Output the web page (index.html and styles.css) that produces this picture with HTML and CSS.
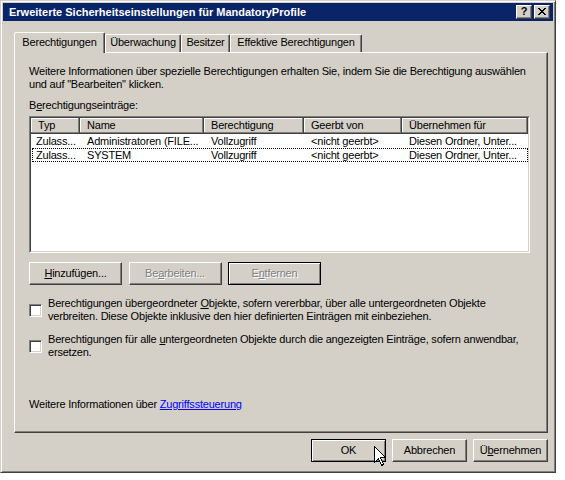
FILE: index.html
```html
<!DOCTYPE html>
<html>
<head>
<meta charset="utf-8">
<link rel="stylesheet" href="styles.css">
</head>
<body>
<div class="window">
  <div class="titlebar">
    <span class="title">Erweiterte Sicherheitseinstellungen für MandatoryProfile</span>
    <div class="capbtns">
      <span class="capbtn help">?</span>
      <span class="capbtn close"><svg width="8" height="7" viewBox="0 0 8 7" shape-rendering="crispEdges"><path d="M0 0h2v1h-2zM6 0h2v1h-2zM1 1h2v1h-2zM5 1h2v1h-2zM2 2h4v1h-4zM3 3h2v1h-2zM2 4h4v1h-4zM1 5h2v1h-2zM5 5h2v1h-2zM0 6h2v1h-2zM6 6h2v1h-2z" fill="#000"/></svg></span>
    </div>
  </div>
  <div class="content">
    <div class="tabs">
      <div class="tab active t1">Berechtigungen</div>
      <div class="tab t2">Überwachung</div>
      <div class="tab t3">Besitzer</div>
      <div class="tab t4">Effektive Berechtigungen</div>
    </div>
    <div class="panel">
      <p class="info">Weitere Informationen über spezielle Berechtigungen erhalten Sie, indem Sie die Berechtigung auswählen<br>und auf "Bearbeiten" klicken.</p>
      <div class="label">B<u>e</u>rechtigungseinträge:</div>
      <div class="list">
        <div class="list-in">
          <div class="lrow head">
            <div class="hcell c1">Typ</div>
            <div class="hcell c2">Name</div>
            <div class="hcell c3">Berechtigung</div>
            <div class="hcell c4">Geerbt von</div>
            <div class="hcell c5">Übernehmen für</div>
          </div>
          <div class="lrow item">
            <div class="cell c1">Zulass...</div>
            <div class="cell c2">Administratoren (FILE...</div>
            <div class="cell c3">Vollzugriff</div>
            <div class="cell c4">&lt;nicht geerbt&gt;</div>
            <div class="cell c5">Diesen Ordner, Unter...</div>
          </div>
          <div class="lrow item focused">
            <div class="cell c1">Zulass...</div>
            <div class="cell c2">SYSTEM</div>
            <div class="cell c3">Vollzugriff</div>
            <div class="cell c4">&lt;nicht geerbt&gt;</div>
            <div class="cell c5">Diesen Ordner, Unter...</div>
          </div>
        </div>
      </div>
      <div class="btnrow">
        <div class="btn"><u>H</u>inzufügen...</div>
        <div class="btn disabled">Be<u>a</u>rbeiten...</div>
        <div class="btn disabled default">E<u>n</u>tfernen</div>
      </div>
      <div class="check first">
        <span class="box"></span>
        <span class="ctext">Berechtigungen übergeordneter <u>O</u>bjekte, sofern vererbbar, über alle untergeordneten Objekte<br>verbreiten. Diese Objekte inklusive den hier definierten Einträgen mit einbeziehen.</span>
      </div>
      <div class="check second">
        <span class="box"></span>
        <span class="ctext">Berechtigungen für alle <u>u</u>ntergeordneten Objekte durch die angezeigten Einträge, sofern anwendbar,<br>ersetzen.</span>
      </div>
      <div class="footer">Weitere Informationen über <a class="link">Zugriffssteuerung</a></div>
    </div>
    <div class="dlgbtns">
      <div class="btn small default">OK</div>
      <div class="btn small">Abbrechen</div>
      <div class="btn small">Ü<u>b</u>ernehmen</div>
    </div>
  </div>
  <svg class="cursor" width="13" height="21" viewBox="0 0 13 21" shape-rendering="crispEdges"><path d="M0.5 0.5 L0.5 16.5 L4.5 12.5 L7.5 19.5 L9.5 18.5 L6.5 11.5 L11.5 11.5 Z" fill="#fff" stroke="#000" stroke-width="1"/></svg>
</div>
</body>
</html>
```
FILE: styles.css
```css
* { box-sizing: border-box; }
html, body { margin: 0; padding: 0; background: #fff; }
body {
  font-family: "Liberation Sans", Arial, sans-serif;
  font-size: 11px;
  line-height: 13px;
  color: #000;
  letter-spacing: -0.2px;
}
u { text-decoration: underline; }

.window {
  position: relative;
  width: 556px;
  height: 473px;
  background: #D4D0C8;
  border: 1px solid;
  border-color: #D4D0C8 #404040 #404040 #D4D0C8;
  box-shadow: inset 1px 1px #fff, inset -1px -1px #808080;
  padding: 2px;
  display: flex;
  flex-direction: column;
}

.titlebar {
  height: 18px;
  background: #0A246A;
  display: flex;
  align-items: center;
  justify-content: space-between;
  padding: 0 3px 0 6px;
}
.title {
  color: #fff;
  font-weight: bold;
  letter-spacing: 0;
  white-space: nowrap;
}
.capbtns { display: flex; gap: 2px; }
.capbtn {
  width: 16px;
  height: 14px;
  background: #D4D0C8;
  border: 1px solid;
  border-color: #fff #404040 #404040 #fff;
  box-shadow: inset -1px -1px #808080;
  display: flex;
  align-items: center;
  justify-content: center;
}
.capbtn.help {
  font-weight: bold;
  font-size: 11px;
  line-height: 11px;
  letter-spacing: 0;
  padding-bottom: 1px;
}
.capbtn.close svg { display: block; margin-bottom: 1px; }

.content {
  flex: 1;
  display: flex;
  flex-direction: column;
  padding: 11px 5px 0 11px;
}

.tabs {
  height: 20px;
  display: flex;
  align-items: flex-end;
}
.tab {
  height: 18px;
  border: 1px solid;
  border-bottom: none;
  border-color: #fff #404040 transparent #fff;
  box-shadow: inset -1px 0 #808080;
  text-align: center;
  padding-top: 1px;
  white-space: nowrap;
  border-radius: 2px 2px 0 0;
}
.tab.active {
  height: 21px;
  padding-top: 3px;
  position: relative;
  z-index: 1;
  margin-bottom: -1px;
  background: #D4D0C8;
}
.t1 { width: 91px; }
.t2 { width: 76px; }
.t3 { width: 49px; }
.t4 { width: 132px; }

.panel {
  height: 381px;
  border: 1px solid;
  border-color: #fff #404040 #404040 #fff;
  box-shadow: inset -1px -1px #808080;
  padding: 12px 0 0 14px;
  display: flex;
  flex-direction: column;
}
.info { margin: 0; white-space: nowrap; }
.label { margin-top: 8px; }

.list {
  margin-top: 4px;
  width: 501px;
  height: 137px;
  border: 1px solid;
  border-color: #808080 #fff #fff #808080;
}
.list-in {
  height: 100%;
  border: 1px solid;
  border-color: #404040 #D4D0C8 #D4D0C8 #404040;
  background: #fff;
}
.lrow { display: flex; white-space: nowrap; }
.head { height: 16px; }
.hcell {
  background: #D4D0C8;
  box-shadow: inset -1px -1px #404040, inset -2px -2px #808080, inset 1px 1px #fff;
  padding: 1px 0 0 7px;
  overflow: hidden;
}
.c1 { width: 49px; }
.c2 { width: 124px; }
.c3 { width: 100px; }
.c4 { width: 98px; }
.c5 { width: 126px; }
.item { height: 14px; line-height: 14px; }
.cell { padding-left: 7px; overflow: hidden; }
.item .c1 { padding-left: 5px; }
.focused {
  outline: 1px dotted #000;
  outline-offset: -1px;
  margin-left: 1px;
  width: 496px;
}
.focused .c1 { width: 48px; padding-left: 4px; }

.btnrow {
  margin-top: 9px;
  display: flex;
  gap: 6.5px;
}
.btn {
  width: 93px;
  height: 23px;
  background: #D4D0C8;
  border: 1px solid;
  border-color: #fff #404040 #404040 #fff;
  box-shadow: inset -1px -1px #808080;
  display: flex;
  align-items: center;
  justify-content: center;
  white-space: nowrap;
  padding-bottom: 1px;
}
.btn.default {
  border-color: #000;
  box-shadow: inset 1px 1px #fff, inset -1px -1px #808080;
}
.btn.disabled {
  color: #808080;
  text-shadow: 1px 1px 0 #fff;
}
.btn.small { width: 75px; }

.check {
  display: flex;
  align-items: center;
  gap: 6px;
  white-space: nowrap;
}
.check.first { margin-top: 12px; }
.check.second { margin-top: 10px; }
.box {
  width: 13px;
  height: 13px;
  flex: none;
  background: #fff;
  border: 1px solid;
  border-color: #808080 #fff #fff #808080;
  box-shadow: inset 1px 1px #404040, inset -1px -1px #D4D0C8;
}

.footer { margin-top: 39px; }
.link { color: #0000FF; text-decoration: underline; }

.dlgbtns {
  margin-top: 6px;
  display: flex;
  justify-content: flex-end;
  gap: 6px;
}

.cursor {
  position: absolute;
  left: 373px;
  top: 445px;
}
```
